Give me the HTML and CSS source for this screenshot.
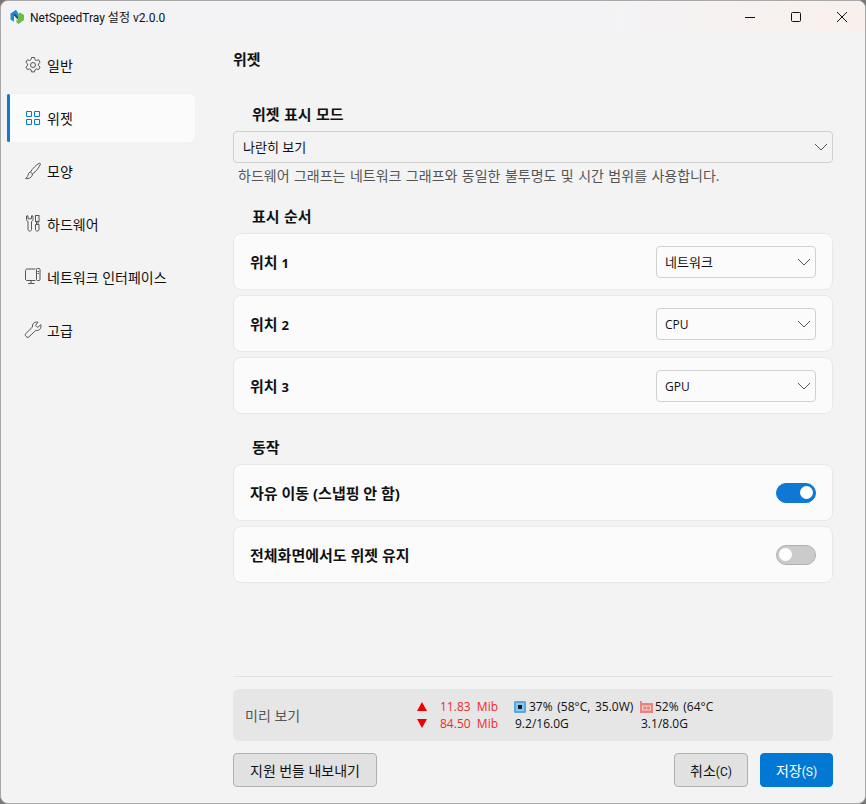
FILE: index.html
```html
<!DOCTYPE html>
<html lang="ko">
<head>
    <meta charset="UTF-8">
    <title>NetSpeedTray 설정 v2.0.0</title>
    <link rel="stylesheet" href="styles.css">
</head>
<body>
    <div class="window">
        <div class="titlebar">
            <svg class="app-logo" width="16" height="16" viewBox="0 0 16 16">
                <path d="M9 5 L11 3.4 L15 6 V11 L9.5 15 L7.5 13.4 V10 L9 11.5 Z" fill="#6bbd45"/>
                <path d="M7 .8 L1.5 4.5 V10.5 L5 12.8 V6.5 L9 10.5 V4 Z" fill="#1f8ad8"/>
                <path d="M5 4.2 L9 8 V10.5 L5 6.5 Z" fill="#1a4f7c"/>
            </svg>
            <span class="app-title">NetSpeedTray 설정 v2.0.0</span>
            <div class="win-buttons">
                <svg width="46" height="30" viewBox="0 0 46 30"><path d="M18 15.5 H28" stroke="#111" fill="none"/></svg>
                <svg width="46" height="30" viewBox="0 0 46 30"><rect x="18.5" y="10.5" width="9" height="9" rx="1" stroke="#111" fill="none"/></svg>
                <svg width="46" height="30" viewBox="0 0 46 30"><path d="M18 10 L28 20 M28 10 L18 20" stroke="#111" fill="none"/></svg>
            </div>
        </div>

        <div class="body-row">
            <nav class="sidebar">
                <div class="nav-item">
                    <svg width="18" height="18" viewBox="0 0 18 18" fill="none" stroke="#555"><path d="M7.5 1.5 h3 l.5 2.2 1.4.8 2.2-.7 1.5 2.6-1.7 1.5 v1.6 l1.7 1.5-1.5 2.6-2.2-.7-1.4.8-.5 2.2 h-3 l-.5-2.2-1.4-.8-2.2.7-1.5-2.6 1.7-1.5 v-1.6 l-1.7-1.5 1.5-2.6 2.2.7 1.4-.8 z"/><circle cx="9" cy="9" r="2.5"/></svg>
                    <span>일반</span>
                </div>
                <div class="nav-item active">
                    <svg width="18" height="18" viewBox="0 0 18 18" fill="none" stroke="#0f78d4" stroke-width="1.1"><rect x="2.5" y="2.5" width="5" height="5" rx=".6"/><rect x="10.5" y="2.5" width="5" height="5" rx=".6"/><rect x="2.5" y="10.5" width="5" height="5" rx=".6"/><rect x="10.5" y="10.5" width="5" height="5" rx=".6"/></svg>
                    <span>위젯</span>
                </div>
                <div class="nav-item">
                    <svg width="18" height="18" viewBox="0 0 18 18" fill="none" stroke="#555"><path d="M15.5 1 C12 3 8.5 6.5 6.5 10 L8.5 12 C12 9.5 15 5.5 16.5 2 Z"/><path d="M6.5 10 C4 10.5 4.5 13 3.5 14.5 L1.5 16.5 C5 17 8 15.5 8.5 12"/></svg>
                    <span>모양</span>
                </div>
                <div class="nav-item">
                    <svg width="18" height="18" viewBox="0 0 18 18" fill="none" stroke="#555"><path d="M2.5 1 V4.5 C2.5 5.6 3.2 6.2 4 6.5 V14.5 C4 16.6 7.5 16.6 7.5 14.5 V6.5 C8.3 6.2 9 5.6 9 4.5 V1 L7.5 .8 V3.8 H4 V.8 Z"/><rect x="11.5" y=".5" width="3.5" height="6"/><path d="M12.5 6.5 V9.5 M14 6.5 V9.5"/><path d="M11.5 9.5 H15 V14.5 C15 16.6 11.5 16.6 11.5 14.5 Z"/></svg>
                    <span>하드웨어</span>
                </div>
                <div class="nav-item">
                    <svg width="18" height="18" viewBox="0 0 18 18" fill="none" stroke="#555"><path d="M11.5 1 H3 C2.2 1 1.5 1.7 1.5 2.5 V11 C1.5 11.8 2.2 12.5 3 12.5 H11.5"/><path d="M7 12.5 V15.5 M4 15.5 H10.5"/><rect x="12.5" y=".5" width="3.5" height="12" rx="1"/><path d="M13.5 3.5 H15 M13.5 5.5 H15"/></svg>
                    <span>네트워크 인터페이스</span>
                </div>
                <div class="nav-item">
                    <svg width="18" height="18" viewBox="0 0 18 18" fill="none" stroke="#555"><path d="M12.5 1 C10 1 8 3.2 8.4 6 L1.6 12.8 C.2 14.2 3.2 17.6 4.8 16 L11.8 9.4 C14.8 10 17 8 17 5 L16.8 3.6 L13.8 6.4 L11.4 4.4 L14 1.2 Z"/></svg>
                    <span>고급</span>
                </div>
            </nav>

            <main class="content">
                <h1 class="page-title">위젯</h1>

                <h2 class="section-title first">위젯 표시 모드</h2>
                <div class="select wide">
                    <span>나란히 보기</span>
                    <svg width="14" height="8" viewBox="0 0 14 8"><path d="M1 1 L7 7 L13 1" fill="none" stroke="#555"/></svg>
                </div>
                <p class="hint">하드웨어 그래프는 네트워크 그래프와 동일한 불투명도 및 시간 범위를 사용합니다.</p>

                <h2 class="section-title order">표시 순서</h2>
                <div class="card-list">
                    <div class="card">
                        <span class="card-label">위치 <span class="num">1</span></span>
                        <div class="select small">
                            <span>네트워크</span>
                            <svg width="14" height="8" viewBox="0 0 14 8"><path d="M1 1 L7 7 L13 1" fill="none" stroke="#555"/></svg>
                        </div>
                    </div>
                    <div class="card">
                        <span class="card-label">위치 <span class="num">2</span></span>
                        <div class="select small">
                            <span class="latin">CPU</span>
                            <svg width="14" height="8" viewBox="0 0 14 8"><path d="M1 1 L7 7 L13 1" fill="none" stroke="#555"/></svg>
                        </div>
                    </div>
                    <div class="card">
                        <span class="card-label">위치 <span class="num">3</span></span>
                        <div class="select small">
                            <span class="latin">GPU</span>
                            <svg width="14" height="8" viewBox="0 0 14 8"><path d="M1 1 L7 7 L13 1" fill="none" stroke="#555"/></svg>
                        </div>
                    </div>
                </div>

                <h2 class="section-title behaviour">동작</h2>
                <div class="card-list">
                    <div class="card">
                        <span class="card-label">자유 이동 (스냅핑 안 함)</span>
                        <div class="toggle on"><i></i></div>
                    </div>
                    <div class="card">
                        <span class="card-label">전체화면에서도 위젯 유지</span>
                        <div class="toggle"><i></i></div>
                    </div>
                </div>

                <div class="footer">
                    <div class="preview">
                        <span class="preview-label">미리 보기</span>
                        <div class="speed-arrows">
                            <svg width="10" height="9" viewBox="0 0 10 9"><path d="M5 0 L10 9 H0 Z" fill="#f00000"/></svg>
                            <svg width="10" height="9" viewBox="0 0 10 9"><path d="M0 0 H10 L5 9 Z" fill="#f00000"/></svg>
                        </div>
                        <div class="speed-values">
                            <span>11.83&nbsp; Mib</span>
                            <span>84.50&nbsp; Mib</span>
                        </div>
                        <div class="hw cpu">
                            <span class="hw-top">
                                <svg width="12" height="12" viewBox="0 0 12 12"><rect width="12" height="12" rx="1.5" fill="#5aa7e0"/><rect x="2" y="2" width="8" height="8" fill="#8cc4ee"/><rect x="4" y="4" width="4" height="4" fill="#0c2233"/></svg>
                                37% (58°C, 35.0W)
                            </span>
                            <span class="hw-mem">9.2/16.0G</span>
                        </div>
                        <div class="hw gpu">
                            <span class="hw-top">
                                <svg width="13" height="12" viewBox="0 0 13 12"><path d="M0 0 H2 V2 H13 V12 H0 Z" fill="#e8837d"/><rect x="2" y="4.5" width="9" height="5" fill="#f6cfcc"/><circle cx="4.8" cy="7" r="1.7" fill="#e8837d"/><circle cx="8.4" cy="7" r="1.7" fill="#e8837d"/></svg>
                                52% (64°C
                            </span>
                            <span class="hw-mem">3.1/8.0G</span>
                        </div>
                    </div>
                    <div class="button-row">
                        <button class="btn export">지원 번들 내보내기</button>
                        <button class="btn cancel">취소<span class="mnemonic">(C)</span></button>
                        <button class="btn primary">저장<span class="mnemonic">(S)</span></button>
                    </div>
                </div>
            </main>
        </div>
    </div>
</body>
</html>
```

FILE: styles.css
```css
* {
    margin: 0;
    padding: 0;
    box-sizing: border-box;
}

body {
    font-family: "Open Sans", "Noto Sans CJK KR", sans-serif;
    font-size: 14px;
    color: #111;
    background-color: #777;
}

.window {
    width: 866px;
    height: 804px;
    display: flex;
    flex-direction: column;
    background-color: #f3f3f3;
    border: 1px solid #a8a8a8;
    border-radius: 8px;
    overflow: hidden;
}

/* title bar */
.titlebar {
    height: 31px;
    flex-shrink: 0;
    display: flex;
    align-items: center;
    padding-left: 8px;
    background: linear-gradient(90deg, #f3f3f5 0%, #f3f3f5 70%, #f9f0ec 100%);
}

.app-title {
    margin-left: 5px;
    font-family: Roboto, "Noto Sans CJK KR", sans-serif;
    font-size: 12px;
}

.win-buttons {
    margin-left: auto;
    display: flex;
}

.body-row {
    flex: 1;
    display: flex;
    min-height: 0;
}

/* sidebar */
.sidebar {
    width: 232px;
    flex-shrink: 0;
    padding: 9px 38px 0 6px;
    display: flex;
    flex-direction: column;
    gap: 5px;
}

.nav-item {
    height: 48px;
    display: flex;
    align-items: center;
    gap: 5px;
    padding-left: 17px;
    border-radius: 6px;
    font-size: 14px;
    position: relative;
}

.nav-item.active {
    background-color: #fbfbfb;
}

.nav-item.active::before {
    content: "";
    position: absolute;
    left: 0;
    top: 0;
    bottom: 0;
    width: 3px;
    border-radius: 2px;
    background-color: #0f78d4;
}

/* content */
.content {
    flex: 1;
    padding-right: 32px;
    display: flex;
    flex-direction: column;
    min-width: 0;
}

.page-title {
    font-size: 15px;
    font-weight: 700;
    line-height: 20px;
    margin-top: 17px;
}

.section-title {
    font-size: 15px;
    font-weight: 700;
    line-height: 20px;
    word-spacing: 0.5px;
    margin: 0 0 7px 19px;
}

.section-title.first {
    margin-top: 35px;
}

.section-title.order {
    margin-top: 20px;
}

.section-title.behaviour {
    margin-top: 23px;
    margin-bottom: 7px;
}

.select {
    display: flex;
    align-items: center;
    justify-content: space-between;
    border: 1px solid #d0d0d0;
    border-radius: 4px;
    padding: 0 4px 0 8px;
    font-size: 13px;
}

.select .latin {
    font-size: 12px;
    padding-top: 2px;
}

.select.wide {
    height: 32px;
    padding-left: 9px;
    padding-bottom: 1px;
    background-color: #f3f3f3;
}

.select.small {
    width: 160px;
    height: 32px;
    background-color: #fbfbfb;
}

.hint {
    font-size: 14px;
    line-height: 20px;
    word-spacing: 0.8px;
    color: #555;
    margin: 3px 0 0 5px;
}

.card-list {
    display: flex;
    flex-direction: column;
    gap: 5px;
}

.card {
    height: 57px;
    display: flex;
    align-items: center;
    justify-content: space-between;
    padding: 0 16px;
    background-color: #fbfbfb;
    border: 1px solid #e8e8e8;
    border-radius: 8px;
}

.card-label {
    font-size: 15px;
    font-weight: 700;
}

.card-label .num {
    font-size: 13px;
}

.toggle {
    width: 40px;
    height: 20px;
    border-radius: 10px;
    background-color: #cbcbcb;
    border: 1px solid #b0b0b0;
    display: flex;
    align-items: center;
    padding: 0 2px;
}

.toggle i {
    width: 13px;
    height: 13px;
    border-radius: 50%;
    background-color: #fff;
}

.toggle.on {
    background-color: #0f78d4;
    border-color: #0f78d4;
    justify-content: flex-end;
}

/* footer */
.footer {
    margin-top: auto;
    border-top: 1px solid #e2e2e2;
    padding: 12px 0 16px;
}

.preview {
    height: 52px;
    display: flex;
    align-items: center;
    padding-left: 12px;
    border-radius: 6px;
    background-color: #e6e6e6;
}

.preview-label {
    width: 172px;
    color: #555;
    font-size: 14px;
}

.speed-arrows {
    width: 23px;
    display: flex;
    flex-direction: column;
    gap: 8px;
}

.speed-values {
    width: 74px;
    display: flex;
    flex-direction: column;
    color: #f02a2a;
    font-size: 12px;
    line-height: 17px;
}

.hw {
    display: flex;
    flex-direction: column;
    font-size: 12px;
    line-height: 17px;
    white-space: nowrap;
}

.hw.cpu {
    width: 126px;
}

.hw-top {
    display: flex;
    align-items: center;
    gap: 3px;
    word-spacing: 1.5px;
}

.hw.gpu .hw-top {
    gap: 2px;
}

.hw-mem {
    padding-left: 1px;
}

.button-row {
    display: flex;
    gap: 12px;
    margin-top: 12px;
}

.btn {
    height: 34px;
    font-family: Roboto, "Noto Sans CJK KR", sans-serif;
    font-size: 14px;
    color: #111;
    border: 1px solid #b0b0b0;
    border-radius: 4px;
    background-color: #e1e1e1;
}

.btn .mnemonic {
    font-size: 12px;
}

.btn.export {
    width: 144px;
    margin-right: auto;
}

.btn.cancel {
    width: 74px;
}

.btn.primary {
    width: 73px;
    color: #fff;
    background-color: #0078d4;
    border-color: #0078d4;
}
```
